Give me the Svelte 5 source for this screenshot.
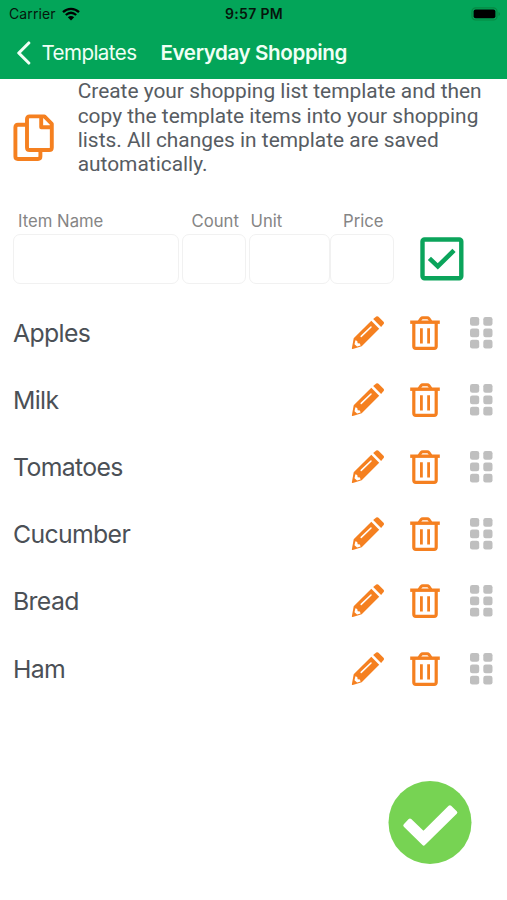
<script>
  let items = $state(['Apples', 'Milk', 'Tomatoes', 'Cucumber', 'Bread', 'Ham']);

  const fields = [
    { label: 'Item Name', cls: 'name' },
    { label: 'Count', cls: 'count' },
    { label: 'Unit', cls: 'unit' },
    { label: 'Price', cls: 'price' }
  ];

  function removeItem(index) {
    items.splice(index, 1);
  }
</script>

<div class="screen">
  <header>
    <div class="status">
      <div class="carrier">
        <span>Carrier</span>
        <svg class="wifi" width="18" height="14" viewBox="0 0 18 14">
          <path d="M1 5.1C5.6 .8 12.4 .8 17 5.1M3.8 8C7 5.2 11 5.2 14.2 8" fill="none" stroke="currentColor" stroke-width="2.3" />
          <path d="M5.8 10.2Q9 7.6 12.2 10.2L9 13.4Z" fill="currentColor" />
        </svg>
      </div>
      <span class="time">9:57 PM</span>
      <svg class="battery" width="30" height="14" viewBox="0 0 30 14">
        <rect x="1" y=".8" width="25" height="12.2" rx="3.6" fill="none" stroke="#078943" stroke-width="1.2" />
        <rect x="2.6" y="2.5" width="21.8" height="8.8" rx="2" fill="#000" />
        <path d="M27.5 5v4q1.5-.6 1.5-2t-1.5-2Z" fill="#078943" />
      </svg>
    </div>

    <nav>
      <button class="back">
        <svg width="15" height="24" viewBox="0 0 15 24">
          <path d="M12.8 2 2.8 12l10 10" fill="none" stroke="currentColor" stroke-width="3.1" stroke-linecap="round" stroke-linejoin="round" />
        </svg>
        <span>Templates</span>
      </button>
      <h1>Everyday Shopping</h1>
    </nav>
  </header>

  <section class="intro">
    <svg width="42" height="48" viewBox="0 0 42 48" fill="none" stroke="#f58020" stroke-width="3.9" stroke-linejoin="round">
      <path d="M14 10.8H4.8Q2.4 10.8 2.4 13.2V42.6Q2.4 45 4.8 45H25Q27.4 45 27.4 42.6V36" />
      <path d="M16.6 2.4H31.4L38.8 9.8V33.4Q38.8 36 36.2 36H16.6Q14 36 14 33.4V5Q14 2.4 16.6 2.4Z" />
      <path d="M28.2 3V13.2H38.4" />
    </svg>
    <p>
      Create your shopping list template and then<br />
      copy the template items into your shopping<br />
      lists. All changes in template are saved<br />
      automatically.
    </p>
  </section>

  <section class="form">
    {#each fields as field}
      <label class={field.cls}>
        <span>{field.label}</span>
        <input type="text" />
      </label>
    {/each}
    <button class="add" aria-label="Add item">
      <svg width="44" height="44" viewBox="0 0 44 44" fill="none" stroke="#0ba45b">
        <rect x="2.5" y="2.5" width="38.8" height="38.8" rx="2" stroke-width="4.4" />
        <path d="m9.4 21.4 8.4 8 16.2-16" stroke-width="4.6" />
      </svg>
    </button>
  </section>

  <ul>
    {#each items as item, i}
      <li>
        <span class="item">{item}</span>

        <button class="edit" aria-label="Edit {item}">
          <svg width="34" height="34" viewBox="0 0 34 34">
            <g fill="#f58020">
              <path d="m22.2 2.9 3-2.3q1.2-.9 2.3.1l5 5q1 1.1.1 2.3l-2.5 3Z" />
              <path d="M20.3 4.8 28.2 12.8 10.7 30.2 1.8 33Q.6 33.3.9 32.1L2.7 22.3Z" />
            </g>
            <path d="M10.2 20.4 20 11" fill="none" stroke="#fff" stroke-width="1.5" stroke-linecap="round" />
            <path d="m4.4 24.2 1.8.8.5 2.2 2.2.4.7 1.8-3.5 1.2-2.6-2.4Z" fill="#fff" />
          </svg>
        </button>

        <button class="trash" aria-label="Delete {item}" onclick={() => removeItem(i)}>
          <svg width="30" height="34" viewBox="0 0 30 34" fill="none" stroke="#f58020">
            <path d="M.2 6.2H29.8" stroke-width="3.4" />
            <path d="M9 5.5 11 2.7Q11.7 1.8 12.8 1.8H17.2Q18.3 1.8 19 2.7L21 5.5" stroke-width="3" />
            <path d="M3.8 7V30.2Q3.8 32.3 5.9 32.3H24.1Q26.2 32.3 26.2 30.2V7" stroke-width="3.2" />
            <path d="M11.4 12.2V27.6M18.6 12.2V27.6" stroke-width="2.8" />
          </svg>
        </button>

        <svg class="grip" width="23" height="32" viewBox="0 0 23 32" fill="#bfbfbf">
          {#each [0, 11.4, 22.8] as y}
            <rect x="0" {y} width="9.2" height="8.8" rx="2.3" />
            <rect x="13.3" {y} width="9.2" height="8.8" rx="2.3" />
          {/each}
        </svg>
      </li>
    {/each}
  </ul>

  <footer>
    <button class="done" aria-label="Done">
      <svg width="84" height="84" viewBox="0 0 84 84">
        <circle cx="42" cy="41.5" r="41.5" fill="#77d353" />
        <path d="m22 39.3 13.5 13L61.9 26.1 67.5 31.5 35.7 62.8 17.1 44.5Z" fill="#fff" stroke="#fff" stroke-width="3.6" stroke-linejoin="round" />
      </svg>
    </button>
  </footer>
</div>

<style>
  :global(body) {
    margin: 0;
    background: #fff;
  }

  .screen {
    display: flex;
    flex-direction: column;
    width: 507px;
    height: 900px;
    overflow: hidden;
    background: #fff;
    font-family: Inter, 'Liberation Sans', sans-serif;
  }

  button {
    display: flex;
    padding: 0;
    border: 0;
    background: none;
    font: inherit;
    color: inherit;
  }

  svg {
    display: block;
    flex-shrink: 0;
  }

  /* header */
  header {
    height: 79px;
    flex-shrink: 0;
    background: #03a559;
  }

  .status {
    display: grid;
    grid-template-columns: 1fr auto 1fr;
    align-items: center;
    height: 27px;
    padding: 0 6px 0 9px;
    font-size: 14px;
    color: #06150c;
  }
  .carrier {
    display: flex;
    align-items: center;
    gap: 6px;
    letter-spacing: 0.1px;
  }
  .time {
    margin-right: 2px;
    font-weight: 600;
    letter-spacing: 0.35px;
  }
  .wifi {
    color: #000;
  }
  .battery {
    justify-self: end;
  }

  nav {
    display: flex;
    align-items: center;
    height: 51px;
    padding-left: 16px;
    color: #f0fff5;
  }
  .back {
    align-items: center;
    gap: 10.5px;
    width: 144.5px;
    font-size: 20.6px;
    letter-spacing: -0.6px;
    white-space: nowrap;
  }
  h1 {
    margin: 0;
    font-size: 20.6px;
    font-weight: 600;
    letter-spacing: -0.4px;
    white-space: nowrap;
  }

  /* intro */
  .intro {
    display: flex;
    align-items: center;
    gap: 23px;
    height: 98px;
    padding-left: 12.7px;
  }
  .intro svg {
    margin-top: 19px;
  }
  p {
    margin: 0;
    font-family: Roboto, sans-serif;
    font-size: 20.9px;
    line-height: 24.4px;
    white-space: nowrap;
    color: #575c62;
  }

  /* new item form */
  .form {
    display: flex;
    align-items: flex-end;
    height: 107px;
    padding-left: 12.5px;
  }
  label {
    display: flex;
    flex-direction: column;
    font-size: 16.7px;
    line-height: 20px;
    color: #858585;
  }
  label span {
    margin-bottom: 3px;
  }
  input {
    box-sizing: border-box;
    width: 100%;
    height: 50px;
    padding: 0 8px;
    border: 1.5px solid #f1f1f1;
    border-radius: 7px;
    background: #fff;
    font: inherit;
  }
  .name {
    width: 166px;
    margin-right: 3px;
  }
  .name span {
    padding-left: 5.5px;
  }
  .count {
    width: 64.5px;
    margin-right: 2.5px;
  }
  .count span {
    padding-left: 10px;
  }
  .unit {
    width: 81.5px;
  }
  .unit span {
    padding-left: 2px;
  }
  .price {
    width: 64px;
  }
  .price span {
    padding-left: 13px;
  }
  .add {
    margin: 0 0 3px 26px;
  }

  /* items */
  ul {
    margin: 15px 0 0;
    padding: 0;
    list-style: none;
  }
  li {
    display: flex;
    align-items: center;
    height: 67.2px;
    padding: 0 14px 0 13px;
  }
  .item {
    flex: 1;
    font-size: 24.8px;
    letter-spacing: -0.65px;
    color: #4b5056;
  }
  .edit {
    margin-right: 25px;
  }
  .trash {
    margin-right: 30px;
  }

  footer {
    display: flex;
    justify-content: flex-end;
    margin-top: auto;
    padding: 0 35px 35px 0;
  }
</style>
